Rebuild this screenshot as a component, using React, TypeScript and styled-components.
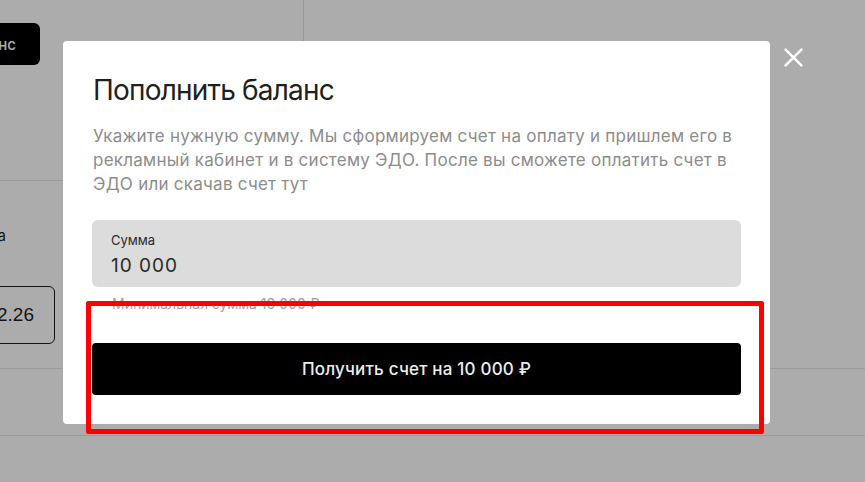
import React from "react";
import styled, { createGlobalStyle } from "styled-components";

const GlobalStyle = createGlobalStyle`
  html, body {
    margin: 0;
    padding: 0;
    width: 100%;
    height: 100%;
    overflow: hidden;
    background: #ffffff;
  }
  body {
    font-family: Inter, "Noto Sans", "Liberation Sans", sans-serif;
    color: #1f1f1f;
  }
  * { box-sizing: border-box; }
`;

/* ---------- page behind the dialog ---------- */

const Page = styled.div`
  width: 100vw;
  height: 100vh;
  display: flex;
  flex-direction: column;
  background: #ffffff;
`;

const TopRow = styled.div`
  height: 181px;
  display: flex;
`;

const SideCell = styled.div`
  width: 304px;
  padding-top: 23px;
  border-right: 1px solid #e6e6e6;
  border-bottom: 1px solid #e6e6e6;
`;

/* a slot whose content is pinned to its right edge and may run off to the left */
const EndSlot = styled.div<{ $width: number }>`
  width: ${(p) => p.$width}px;
  display: flex;
  justify-content: flex-end;
`;

const DarkButton = styled.button`
  flex-shrink: 0;
  height: 42px;
  padding: 0 24px;
  border: none;
  border-radius: 6px;
  background: #000000;
  color: #ffffff;
  font-family: inherit;
  font-size: 15px;
  font-weight: 500;
  white-space: nowrap;
`;

const Section = styled.div<{ $height: number; $pad?: number }>`
  height: ${(p) => p.$height}px;
  padding-top: ${(p) => p.$pad ?? 0}px;
  border-bottom: 1px solid #e6e6e6;
  display: flex;
  flex-direction: column;
`;

const FieldLabel = styled.div`
  flex-shrink: 0;
  font-size: 15px;
  line-height: 20px;
  color: #1f1f1f;
  white-space: nowrap;
`;

const DateBox = styled.div`
  flex-shrink: 0;
  height: 58px;
  padding: 0 20px;
  border: 1px solid #1f1f1f;
  border-radius: 6px;
  display: flex;
  align-items: center;
  font-family: "Liberation Sans", Arial, sans-serif;
  font-size: 19px;
  color: #1f1f1f;
  white-space: nowrap;
`;

const Spacer = styled.div<{ $h: number }>`
  height: ${(p) => p.$h}px;
  flex-shrink: 0;
`;

/* ---------- dialog ---------- */

const Overlay = styled.div`
  position: fixed;
  inset: 0;
  background: rgba(0, 0, 0, 0.325);
  display: flex;
  justify-content: center;
  align-items: flex-start;
  padding-top: 41px;
`;

const DialogGroup = styled.div`
  display: flex;
  align-items: flex-start;
  gap: 14px;
  margin-left: 1px;
`;

const Dialog = styled.div`
  position: relative;
  width: 707px;
  padding: 31px 29px 29px;
  background: #ffffff;
  border-radius: 4px;
`;

const Title = styled.h2`
  margin: 0;
  padding-left: 1px;
  font-size: 28px;
  line-height: 36px;
  font-weight: 400;
  letter-spacing: -0.8px;
  color: #1f1f1f;
`;

const Lead = styled.p`
  margin: 16px 0 0;
  padding-left: 1px;
  font-size: 17px;
  line-height: 24px;
  letter-spacing: 0.25px;
  color: #8c8c8c;
`;

const InputBox = styled.label`
  margin-top: 24px;
  display: flex;
  flex-direction: column;
  gap: 6px;
  padding: 12px 19px 9px;
  background: #dcdcdc;
  border-radius: 6px;
`;

const InputCaption = styled.span`
  font-size: 13px;
  line-height: 16px;
  color: #2a2a2a;
`;

const InputValue = styled.span`
  font-size: 19px;
  line-height: 24px;
  letter-spacing: 1px;
  color: #2a2a2a;
`;

const Hint = styled.div`
  margin-top: 7px;
  padding-left: 20px;
  font-size: 14px;
  line-height: 20px;
  color: #9e9e9e;
`;

const SubmitButton = styled.button`
  margin-top: 29px;
  width: 100%;
  height: 52px;
  border: none;
  border-radius: 4px;
  background: #000000;
  color: #ededed;
  font-family: inherit;
  font-size: 17px;
  font-weight: 500;
  letter-spacing: 0.2px;
`;

const Highlight = styled.div`
  position: absolute;
  left: 23px;
  top: 260px;
  width: 678px;
  height: 133px;
  border: 5px solid #ff0000;
  border-radius: 2px;
  pointer-events: none;
`;

const CloseButton = styled.button`
  margin-top: 7px;
  width: 19px;
  height: 19px;
  padding: 0;
  border: none;
  background: transparent;
  display: flex;
  align-items: center;
  justify-content: center;
`;

function CloseIcon() {
  return (
    <svg width="19" height="19" viewBox="0 0 19 19" fill="none">
      <path
        d="M1.6 1.6 L17.4 17.4 M17.4 1.6 L1.6 17.4"
        stroke="#ffffff"
        strokeWidth="2.5"
        strokeLinecap="round"
      />
    </svg>
  );
}

export default function App() {
  return (
    <>
      <GlobalStyle />
      <Page>
        <TopRow>
          <SideCell>
            <EndSlot $width={40}>
              <DarkButton>Пополнить баланс</DarkButton>
            </EndSlot>
          </SideCell>
        </TopRow>
        <Section $height={188} $pad={45}>
          <EndSlot $width={6}>
            <FieldLabel>Дата</FieldLabel>
          </EndSlot>
          <Spacer $h={40} />
          <EndSlot $width={55}>
            <DateBox>12.02.26</DateBox>
          </EndSlot>
        </Section>
        <Section $height={67} />
      </Page>

      <Overlay>
        <DialogGroup>
          <Dialog>
            <Title>Пополнить баланс</Title>
            <Lead>
              Укажите нужную сумму. Мы сформируем счет на оплату и пришлем его в
              рекламный кабинет и в систему ЭДО. После вы сможете оплатить счет в
              ЭДО или скачав счет тут
            </Lead>
            <InputBox>
              <InputCaption>Сумма</InputCaption>
              <InputValue>10 000</InputValue>
            </InputBox>
            <Hint>Минимальная сумма 10 000 ₽</Hint>
            <SubmitButton>Получить счет на 10 000 ₽</SubmitButton>
            <Highlight />
          </Dialog>
          <CloseButton aria-label="Закрыть">
            <CloseIcon />
          </CloseButton>
        </DialogGroup>
      </Overlay>
    </>
  );
}
